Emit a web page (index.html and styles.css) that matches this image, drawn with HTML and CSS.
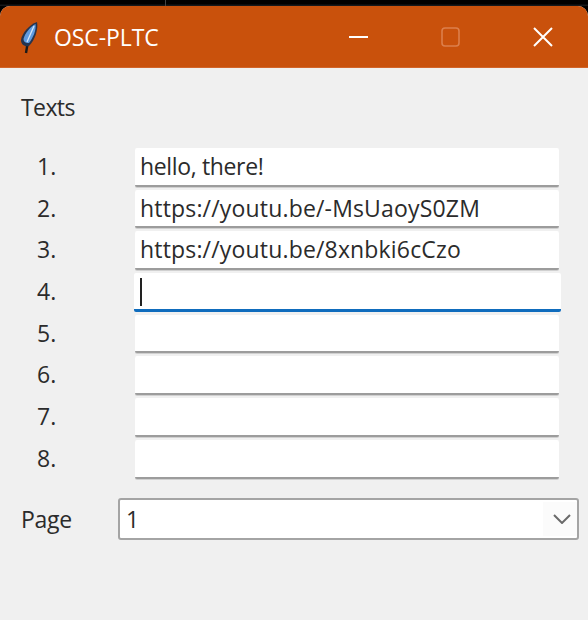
FILE: index.html
```html
<!DOCTYPE html>
<html lang="en">
<head>
  <meta charset="UTF-8">
  <title>OSC-PLTC</title>
  <link rel="stylesheet" href="styles.css">
</head>
<body>
  <div class="topstrip"><span class="topstrip-mark"></span></div>
  <div class="window">
    <div class="titlebar">
      <svg class="feather" width="20" height="36" viewBox="0 0 20 36">
        <path d="M7 33 L8.5 24" stroke="#1a1a1a" stroke-width="2.4" fill="none"/>
        <path d="M18 2 C19.5 9 16 20 10 26 C6 27 2 25 2 20 C3 13 10 5 18 2 Z" fill="#26344e"/>
        <path d="M16.5 4 C17.5 10 14 18 10 23 C7 23.5 4.5 22 4.5 19 C6 13 11 7 16.5 4 Z" fill="#5f9be0"/>
        <path d="M15 6 L8 22" stroke="#d5e6f8" stroke-width="1.2" fill="none"/>
      </svg>
      <span class="title">OSC-PLTC</span>
      <div class="controls">
        <svg width="19" height="20" viewBox="0 0 19 20"><path d="M0 10 H19" stroke="#fff" stroke-width="2"/></svg>
        <svg width="19" height="20" viewBox="0 0 19 20"><rect x="1" y="1" width="17" height="18" rx="3" fill="none" stroke="#dc7f4c" stroke-width="1.6"/></svg>
        <svg width="20" height="20" viewBox="0 0 20 20"><path d="M1 1 L19 19 M19 1 L1 19" stroke="#fff" stroke-width="2"/></svg>
      </div>
    </div>

    <div class="content">
      <div class="heading">Texts</div>

      <div class="rows">
        <div class="num">1.</div>
        <div class="entry short">hello, there!</div>
        <div class="num">2.</div>
        <div class="entry url">https://youtu.be/-MsUaoyS0ZM</div>
        <div class="num">3.</div>
        <div class="entry url">https://youtu.be/8xnbki6cCzo</div>
        <div class="num">4.</div>
        <div class="entry focused"><span class="caret"></span></div>
        <div class="num">5.</div>
        <div class="entry"></div>
        <div class="num">6.</div>
        <div class="entry"></div>
        <div class="num">7.</div>
        <div class="entry"></div>
        <div class="num">8.</div>
        <div class="entry"></div>
      </div>

      <div class="page-row">
        <div class="page-label">Page</div>
        <div class="combo">
          <span class="combo-value">1</span>
          <div class="combo-arrow">
            <svg width="18" height="10" viewBox="0 0 18 10"><path d="M1 1 L9 9 L17 1" fill="none" stroke="#6a6a6a" stroke-width="2"/></svg>
          </div>
        </div>
      </div>
    </div>
  </div>
</body>
</html>
```
FILE: styles.css
```css
* {
  box-sizing: border-box;
}

html, body {
  height: 100%;
}

body {
  margin: 0;
  background: #000;
  font-family: "Open Sans", "Noto Sans", sans-serif;
  font-size: 23px;
  color: #2b2b2b;
  overflow: hidden;
}

.topstrip {
  height: 6px;
  background: linear-gradient(#000 60%, #1c1e22);
  padding-left: 165px;
}

.topstrip-mark {
  display: block;
  width: 1px;
  height: 6px;
  background: #444;
}

.window {
  height: 614px;
  background: #f0f0f0;
  border-radius: 10px 10px 0 0;
  overflow: hidden;
}

.titlebar {
  height: 62px;
  background: #c9510c;
  border-bottom: 1px solid #d2652a;
  display: flex;
  align-items: center;
  color: #fff;
  padding-left: 19px;
}

.feather {
  flex: none;
  margin-top: 2px;
}

.title {
  margin-left: 15px;
  font-size: 23px;
  letter-spacing: -0.1px;
}

.controls {
  margin-left: auto;
  display: flex;
  align-items: center;
  gap: 73px;
  padding-right: 35px;
}

.content {
  padding: 0 9px 0 21px;
}

.heading {
  height: 80px;
  line-height: 78px;
  letter-spacing: -0.6px;
}

.rows {
  display: grid;
  grid-template-columns: 114px 424px;
  grid-auto-rows: 38.7px;
  row-gap: 3px;
}

.num {
  padding-left: 16px;
  line-height: 37px;
}

.entry {
  background: #fff;
  border-bottom: 2px solid #9c9c9c;
  box-shadow: 0 1px 0 #d0d0d0;
  border-radius: 2px;
  padding-left: 5px;
  line-height: 36px;
  white-space: nowrap;
}

.entry.url {
  letter-spacing: 0.17px;
}

.entry.short {
  letter-spacing: -0.35px;
}

.entry.focused {
  border-bottom: 3px solid #0f6cbd;
  box-shadow: none;
  margin: 0 -2px 0 -1px;
  padding-left: 6px;
}

.caret {
  display: inline-block;
  width: 2px;
  height: 28px;
  background: #222;
  vertical-align: middle;
  margin-bottom: 3px;
}

.page-row {
  display: flex;
  align-items: center;
  margin-top: 19px;
}

.page-label {
  width: 97px;
  letter-spacing: -0.3px;
}

.combo {
  width: 461px;
  height: 42px;
  background: #fff;
  border: 2px solid #a4a4a4;
  border-radius: 3px;
  display: flex;
  align-items: center;
  padding-left: 6px;
}

.combo-arrow {
  margin-left: auto;
  width: 34px;
  height: 34px;
  background: #fbfbfb;
  display: flex;
  align-items: center;
  justify-content: center;
  padding-left: 4px;
}
```
